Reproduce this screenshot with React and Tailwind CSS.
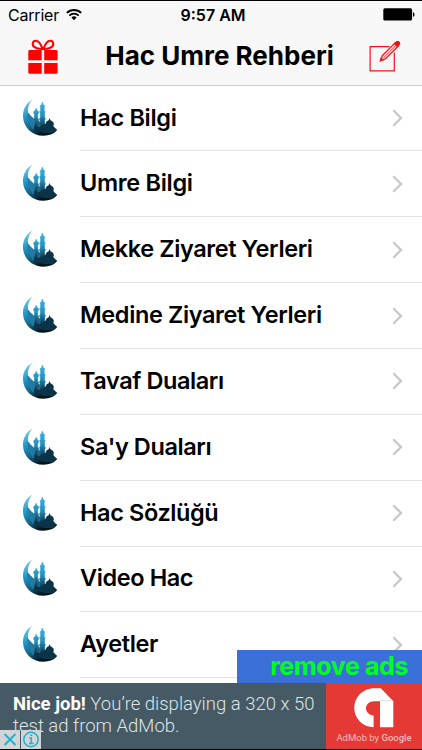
const ITEMS = [
  { label: 'Hac Bilgi', tracking: 'tracking-[-0.3px]' },
  { label: 'Umre Bilgi', tracking: 'tracking-[-0.3px]' },
  { label: 'Mekke Ziyaret Yerleri', tracking: 'tracking-[-0.4px]' },
  { label: 'Medine Ziyaret Yerleri', tracking: 'tracking-[-0.37px]' },
  { label: 'Tavaf Duaları', tracking: 'tracking-[-0.43px]' },
  { label: "Sa'y Duaları", tracking: 'tracking-[-0.4px]' },
  { label: 'Hac Sözlüğü', tracking: 'tracking-[-0.4px]' },
  { label: 'Video Hac', tracking: 'tracking-[-0.4px]' },
  { label: 'Ayetler', tracking: 'tracking-[-0.35px]' },
]

function WifiIcon() {
  return (
    <svg width="16" height="13" viewBox="0 0 16 13" fill="none" stroke="#000" strokeWidth="1.8">
      <path d="M0.8 4.9a10.4 10.4 0 0 1 14.4 0" />
      <path d="M3.3 7.6a6.8 6.8 0 0 1 9.4 0" />
      <path d="M8 12.2 5.4 9.5a3.8 3.8 0 0 1 5.2 0z" fill="#000" stroke="none" />
    </svg>
  )
}

function BatteryIcon() {
  return (
    <svg width="32" height="13" viewBox="0 0 32 13">
      <rect x="0.3" y="0.3" width="28.8" height="12.2" rx="1.6" fill="#000" />
      <path d="M30 4.2c2 .6 2 4 0 4.6z" fill="#000" />
    </svg>
  )
}

function GiftIcon() {
  return (
    <svg width="30" height="35" viewBox="0 0 30 35" fill="#fe0000">
      <g fill="none" stroke="#fe0000" strokeWidth="2.1">
        <path d="M14.6 10C11 10.2 4.6 8.8 4.7 5c.1-2.4 1.5-3.6 3.6-3.2 3.2.5 4.9 4.4 6.3 8.2z" />
        <path d="M15.4 10c3.6.2 10-1.2 9.9-5-.1-2.4-1.5-3.6-3.6-3.2-3.2.5-4.9 4.4-6.3 8.2z" />
      </g>
      <path d="M1.7 11H13.7V21.3H.3V12.4Q.3 11 1.7 11z" />
      <path d="M16.2 11H28.2Q29.6 11 29.6 12.4V21.3H16.2z" />
      <path d="M.3 23.9H13.7V34.7H1.7Q.3 34.7.3 33.3z" />
      <path d="M16.2 23.9H29.6V33.3Q29.6 34.7 28.2 34.7H16.2z" />
    </svg>
  )
}

function ComposeIcon() {
  return (
    <svg width="32" height="31" viewBox="0 0 32 31" fill="none" stroke="#f01414" strokeWidth="1.2">
      <path d="M20.5 5.6H1.1V29.9H25.3V11.5" />
      <path d="M11.7 19.4 13.3 14.7 26.2 1.9 29.3 5 16.3 17.9z" strokeWidth="1.3" />
      <path d="M14.4 17 26.5 4.9" strokeWidth="1" />
      <path d="m25.4 2.7 1.7-1.6c1-.9 2.1-.8 2.9 0s.9 1.9 0 2.8l-1.6 1.7z" fill="#f01414" stroke="#f01414" />
      <path d="m11.3 19.8.8-2.6 1.7 1.8z" fill="#f01414" />
    </svg>
  )
}

function MosqueIcon() {
  return (
    <svg width="38" height="38" viewBox="0 0 38 38">
      <defs>
        <linearGradient id="night" x1="0.1" y1="0" x2="0.55" y2="1">
          <stop offset="0" stopColor="#7fd0ea" />
          <stop offset="0.35" stopColor="#2a9ccb" />
          <stop offset="0.7" stopColor="#145f83" />
          <stop offset="0.95" stopColor="#03141d" />
        </linearGradient>
        <linearGradient id="tower" gradientUnits="userSpaceOnUse" x1="0" y1="3" x2="0" y2="33">
          <stop offset="0" stopColor="#3cb4e0" />
          <stop offset="0.45" stopColor="#2590bd" />
          <stop offset="0.7" stopColor="#125576" />
          <stop offset="1" stopColor="#03141d" />
        </linearGradient>
      </defs>
      {/* crescent */}
      <path
        d="M10.200.8C4.200 4.200.8 10.200 1 17.400 1.300 28.300 10 36.600 21.500 36.700c6 0 10.700-2 13.700-5.700l-2.200-2H14C10.500 24.500 9 20.500 7.300 17.500 4.800 12.500 5.800 6 10.200.8z"
        fill="url(#night)"
      />
      <path d="M5.500 13.500c2 .5 2.500 3.500 4.500 4.200l2 2V31C8 27 5.500 21 5.500 13.500z" fill="#1d7da6" />
      {/* minarets */}
      <g fill="url(#tower)" stroke="url(#tower)" strokeWidth="0.6">
        <path d="M14.2 9.3 15.1 11.5l1.3 1v2l-.7 1v3.8l1 1-.8 1.200V31h-3.600V21.500l-.8-1.200 1-1v-3.800l-.7-1v-2l1.500-1z" />
        <path d="M20.300 3 21.300 5.700l1.400 1.100-.5 1.900v3l1 1-.7 1.500v4.300l.9 1.200-.7 1.500V32h-4.600V21.200l-.7-1.500.9-1.200v-4.300l-.7-1.500 1-1v-3l-.5-1.900 1.400-1.100z" />
      </g>
      <path d="M16.500 21c.8.7 1.500 1.700 1.500 3v7h-2.500v-8z" fill="#14678c" />
      {/* domes */}
      <path
        d="M12 30.500V29l3-1.500 3 .5 4.500-3 1.200-.3c.2-1.800 1.400-2.700 3-3.400l.9-2.300.9 2.300c1.800.8 3.300 1.800 3.300 3.700 0 .9-.3 1.500-.6 2.200l1.500.9-.3 1.400 2 1-2.700 3.500L22 34z"
        fill="#0b3448"
      />
    </svg>
  )
}

function Chevron() {
  return (
    <svg width="12" height="18" viewBox="0 0 12 18" fill="none" stroke="#c7c7cc" strokeWidth="2.3">
      <path d="M1.3 1.3 9 9 1.3 16.7" />
    </svg>
  )
}

function AdMobLogo() {
  return (
    <svg width="40" height="40" viewBox="0 0 40 40">
      <path
        d="M20 .3h6.800L39.300 13.200V39.300H26V13.200H20C15.300 13.200 12 16.400 12 20.300c0 3.700 2.900 6.700 7.600 7.200V39.300C9 39.300.3 31 .3 20.100S9 .3 20 .3z"
        fill="#fff"
      />
      <path d="M26 13.200H39.300L38.300 12.200H26z" fill="#dcdcdc" />
    </svg>
  )
}

function StatusBar() {
  return (
    <div className="flex h-[27px] items-center text-[16px] leading-none">
      <div className="flex flex-1 items-center gap-[7px] pl-[8px]">
        <span className="tracking-[-0.2px]">Carrier</span>
        <WifiIcon />
      </div>
      <span className="ml-[3px] font-semibold">9:57 AM</span>
      <div className="flex flex-1 justify-end pr-[7px]">
        <BatteryIcon />
      </div>
    </div>
  )
}

function Row({ label, tracking }) {
  return (
    <li className="flex h-[65.85px] shrink-0 items-stretch">
      <div className="flex w-[80px] items-center pb-[2px] pl-[21.5px]">
        <MosqueIcon />
      </div>
      <div className="flex flex-1 items-center justify-between border-b border-[#e2e2e4] pr-[18px]">
        <span className={`whitespace-nowrap pb-[1.5px] text-[23.5px] font-semibold leading-none ${tracking}`}>{label}</span>
        <Chevron />
      </div>
    </li>
  )
}

function AdBanner() {
  return (
    <div className="relative flex h-[66px] shrink-0 bg-[#455a64] font-['Roboto',sans-serif]">
      <div className="flex-1 whitespace-nowrap pl-[13px] pt-[10px] text-[18.5px] font-light leading-[22px] text-[#dfe4e7]">
        <p><b className="font-bold text-white">Nice job!</b> You’re displaying a 320 x 50</p>
        <p>test ad from AdMob.</p>
      </div>
      <div className="flex w-[96px] flex-col items-center bg-[#e53935] pt-[5px]">
        <AdMobLogo />
        <span className="mt-[3px] whitespace-nowrap text-[9.5px] leading-[14px] text-[#f6b9b7]">
          AdMob by <span className="font-medium">Google</span>
        </span>
      </div>
      {/* ad choices */}
      <div className="absolute bottom-0 left-0 flex gap-px">
        <svg width="20" height="19" viewBox="0 0 20 19" fill="none" stroke="#22b1d0" strokeWidth="2">
          <rect width="20" height="19" fill="#d2d4d5" stroke="none" />
          <path d="m4.5 4 11 11m0-11-11 11" />
        </svg>
        <svg width="20" height="19" viewBox="0 0 20 19" fill="none" stroke="#22b1d0" strokeWidth="1.5">
          <rect width="20" height="19" fill="#d2d4d5" stroke="none" />
          <circle cx="10" cy="9.5" r="7.2" />
          <path d="M8.300 8H10.300V13.500M8 13.500h4.500M9.300 5.300h2" />
        </svg>
      </div>
    </div>
  )
}

export default function App() {
  return (
    <div className="flex h-[750px] w-[422px] flex-col overflow-hidden border-y border-black bg-white font-['Inter',sans-serif] text-black">
      <header className="h-[84.6px] shrink-0 border-b border-[#cfcfd1] bg-[#f7f7f7]">
        <StatusBar />
        <div className="flex h-[56px] items-center justify-between pl-[28px] pr-[21px]">
          <GiftIcon />
          <h1 className="ml-[12px] whitespace-nowrap text-[26px] font-bold leading-none">Hac Umre Rehberi</h1>
          <ComposeIcon />
        </div>
      </header>

      <main className="relative min-h-0 flex-1 overflow-hidden">
        <ul className="flex flex-col">
          {ITEMS.map((item) => (
            <Row key={item.label} {...item} />
          ))}
        </ul>
        <button className="absolute bottom-0 right-0 h-[33px] w-[185px] whitespace-nowrap bg-[#3068d6]/95 pr-[14px] text-right text-[25px] font-bold leading-none tracking-[-0.4px] text-[#00ff1e]">
          remove ads
        </button>
      </main>

      <AdBanner />
    </div>
  )
}
